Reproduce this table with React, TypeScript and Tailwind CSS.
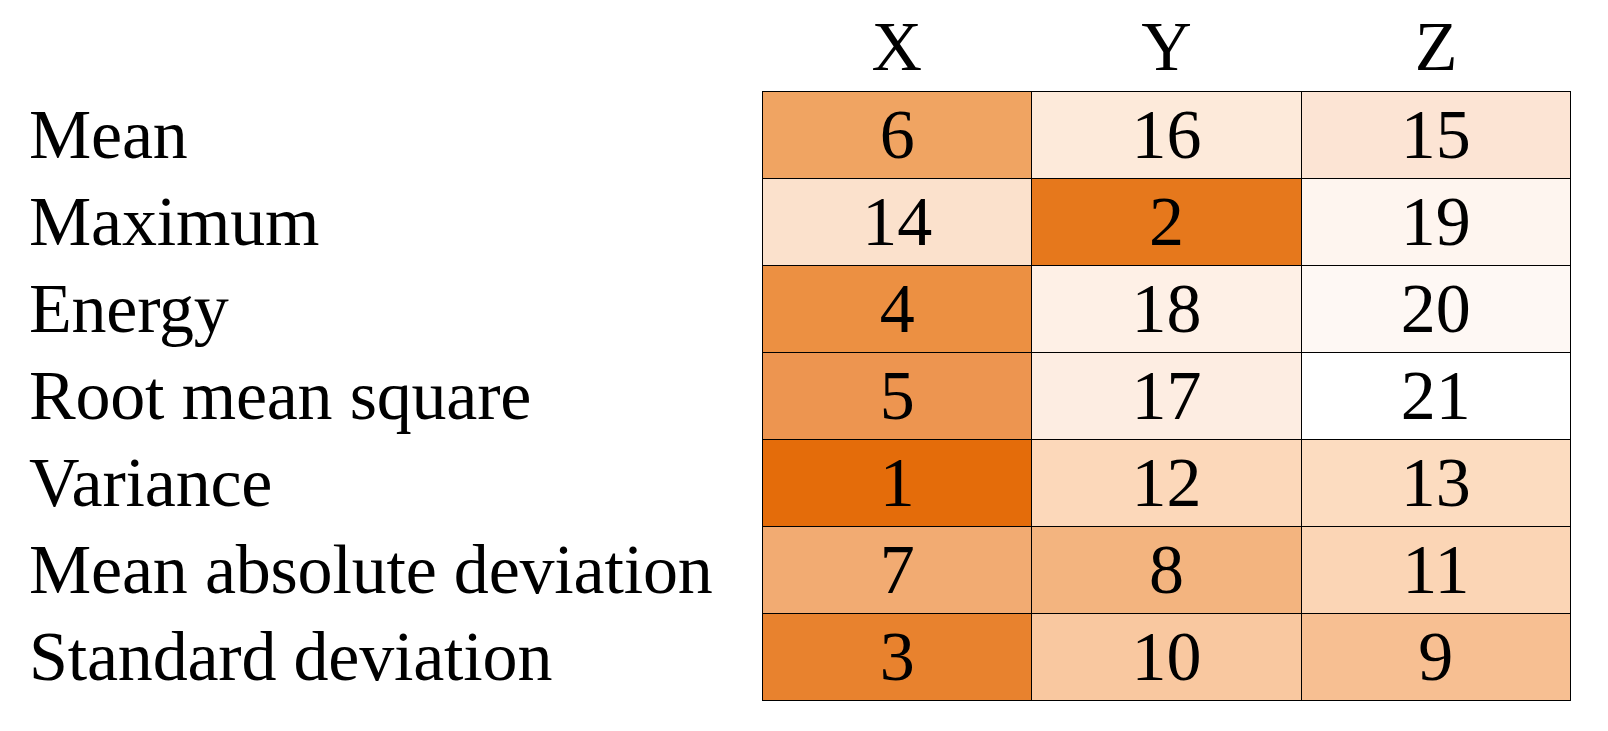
const COLS = ['X', 'Y', 'Z']

const ROWS: { label: string; cells: { v: number; bg: string }[] }[] = [
  {
    label: 'Mean',
    cells: [
      { v: 6, bg: 'bg-[#f0a462]' },
      { v: 16, bg: 'bg-[#fdeada]' },
      { v: 15, bg: 'bg-[#fce4d4]' },
    ],
  },
  {
    label: 'Maximum',
    cells: [
      { v: 14, bg: 'bg-[#fbe1cc]' },
      { v: 2, bg: 'bg-[#e6781c]' },
      { v: 19, bg: 'bg-[#fef5ef]' },
    ],
  },
  {
    label: 'Energy',
    cells: [
      { v: 4, bg: 'bg-[#ec9042]' },
      { v: 18, bg: 'bg-[#fef0e6]' },
      { v: 20, bg: 'bg-[#fef8f4]' },
    ],
  },
  {
    label: 'Root mean square',
    cells: [
      { v: 5, bg: 'bg-[#ed9550]' },
      { v: 17, bg: 'bg-[#fdede2]' },
      { v: 21, bg: 'bg-[#ffffff]' },
    ],
  },
  {
    label: 'Variance',
    cells: [
      { v: 1, bg: 'bg-[#e46c0a]' },
      { v: 12, bg: 'bg-[#fcd8ba]' },
      { v: 13, bg: 'bg-[#fcdcc0]' },
    ],
  },
  {
    label: 'Mean absolute deviation',
    cells: [
      { v: 7, bg: 'bg-[#f2ab72]' },
      { v: 8, bg: 'bg-[#f3b47f]' },
      { v: 11, bg: 'bg-[#fbd5b5]' },
    ],
  },
  {
    label: 'Standard deviation',
    cells: [
      { v: 3, bg: 'bg-[#e8822e]' },
      { v: 10, bg: 'bg-[#f9c8a0]' },
      { v: 9, bg: 'bg-[#f7bf92]' },
    ],
  },
]

export default function App() {
  return (
    <div className="flex h-[731px] w-[1608px] bg-white font-['Liberation_Serif','Times_New_Roman',serif] text-[70px] text-black">
      {/* row labels */}
      <div className="flex w-[762px] flex-col pt-[91px] pl-[29px] tracking-[-0.2px]">
        {ROWS.map((r) => (
          <div key={r.label} className="h-[87px] whitespace-nowrap leading-[87px]">
            {r.label}
          </div>
        ))}
      </div>

      {/* heat map */}
      <div className="flex w-[809px] flex-col">
        <div className="grid h-[91px] grid-cols-3 items-end pb-[1px]">
          {COLS.map((c) => (
            <div key={c} className="text-center leading-[86px]">
              {c}
            </div>
          ))}
        </div>
        <div className="grid grid-cols-3 gap-px bg-black p-px">
          {ROWS.flatMap((r) =>
            r.cells.map((cell, i) => (
              <div
                key={r.label + i}
                className={`h-[86px] text-center leading-[86px] ${cell.bg}`}
              >
                {cell.v}
              </div>
            ))
          )}
        </div>
      </div>
    </div>
  )
}
